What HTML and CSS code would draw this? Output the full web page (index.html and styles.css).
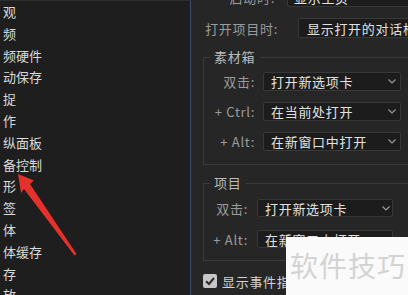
FILE: index.html
```html
<!DOCTYPE html>
<html lang="zh-CN">
<head>
<meta charset="utf-8">
<title>首选项</title>
<link rel="stylesheet" href="styles.css">
</head>
<body>
<div class="screen">
  <div class="side">
    <ul class="list">
      <li>观</li>
      <li>频</li>
      <li>频硬件</li>
      <li>动保存</li>
      <li>捉</li>
      <li>作</li>
      <li>纵面板</li>
      <li>备控制</li>
      <li>形</li>
      <li>签</li>
      <li>体</li>
      <li>体缓存</li>
      <li>存</li>
      <li>放</li>
    </ul>
    <svg class="arrow" width="90" height="100" viewBox="0 165 90 100">
      <polygon points="18,174 34,180.5 30,184 76.5,254 74.5,255.5 24,189 21,193" fill="#e5312b"/>
    </svg>
  </div>
  <div class="main">
    <div class="row r1">
      <span class="lbl">启动时:</span>
      <div class="sel wide">显示主页</div>
    </div>
    <div class="row r2">
      <span class="lbl">打开项目时:</span>
      <div class="sel wide">显示打开的对话框</div>
    </div>
    <fieldset class="grp g1">
      <legend>素材箱</legend>
      <div class="rows">
        <div class="row">
          <span class="lbl">双击:</span>
          <div class="sel">打开新选项卡<svg class="chev" width="8" height="5" viewBox="0 0 8 5"><polyline points="0.5,0.5 4,4 7.5,0.5" fill="none" stroke="#9a9a9a" stroke-width="1.2"/></svg></div>
        </div>
        <div class="row">
          <span class="lbl">+ Ctrl:</span>
          <div class="sel">在当前处打开<svg class="chev" width="8" height="5" viewBox="0 0 8 5"><polyline points="0.5,0.5 4,4 7.5,0.5" fill="none" stroke="#9a9a9a" stroke-width="1.2"/></svg></div>
        </div>
        <div class="row">
          <span class="lbl">+ Alt:</span>
          <div class="sel">在新窗口中打开<svg class="chev" width="8" height="5" viewBox="0 0 8 5"><polyline points="0.5,0.5 4,4 7.5,0.5" fill="none" stroke="#9a9a9a" stroke-width="1.2"/></svg></div>
        </div>
      </div>
    </fieldset>
    <fieldset class="grp g2">
      <legend>项目</legend>
      <div class="rows">
        <div class="row">
          <span class="lbl">双击:</span>
          <div class="sel">打开新选项卡<svg class="chev" width="8" height="5" viewBox="0 0 8 5"><polyline points="0.5,0.5 4,4 7.5,0.5" fill="none" stroke="#9a9a9a" stroke-width="1.2"/></svg></div>
        </div>
        <div class="row">
          <span class="lbl">+ Alt:</span>
          <div class="sel">在新窗口中打开<svg class="chev" width="8" height="5" viewBox="0 0 8 5"><polyline points="0.5,0.5 4,4 7.5,0.5" fill="none" stroke="#9a9a9a" stroke-width="1.2"/></svg></div>
        </div>
      </div>
    </fieldset>
    <div class="chk">
      <span class="box"><svg width="14" height="14" viewBox="0 0 14 14"><polyline points="3,7.2 6,10 11,4" fill="none" stroke="#2a2a2a" stroke-width="2"/></svg></span>
      <span class="chk-text">显示事件指示器</span>
    </div>
  </div>
  <div class="wm">软件技巧</div>
</div>
</body>
</html>
```
FILE: styles.css
```css
* { box-sizing: border-box; }
html, body {
  margin: 0;
  padding: 0;
  background: #252525;
}
body {
  width: 408px;
  height: 295px;
  overflow: hidden;
  font-family: "Noto Sans CJK SC", "Noto Sans", sans-serif;
}
.screen {
  position: relative;
  display: flex;
  width: 408px;
  height: 295px;
  overflow: hidden;
}
.side {
  position: relative;
  width: 191px;
  flex: none;
  background: #1e1e1e;
  border-top: 1px solid #2e2e2e;
  border-right: 1px solid #3f4d6d;
}
.list {
  list-style: none;
  margin: 0;
  padding: 0 0 0 3px;
  font-size: 13px;
  line-height: 21.8px;
  color: #dadada;
}
.arrow {
  position: absolute;
  left: 0;
  top: 164px;
}
.main {
  flex: 1;
  min-width: 0;
  overflow: hidden;
  background: #262626;
  font-size: 13px;
  letter-spacing: 0.7px;
}
.row {
  display: flex;
  align-items: center;
}
.lbl {
  flex: none;
  text-align: right;
  color: #9b9b9b;
  white-space: nowrap;
}
.sel {
  display: flex;
  align-items: center;
  justify-content: space-between;
  background: #1c1c1c;
  border: 1px solid #383838;
  border-radius: 2px;
  color: #e2e2e2;
  white-space: nowrap;
  padding: 0 4px 0 7px;
}
.sel.wide {
  flex: none;
  width: 200px;
  height: 20px;
}
.r1 {
  margin-top: -12px;
  height: 19px;
}
.r1 .lbl { width: 84px; margin-right: 12px; }
.r1 .sel { height: 19px; padding-left: 6px; }
.r2 {
  margin-top: 11px;
  height: 20px;
}
.r2 .lbl { width: 87px; margin-right: 20px; }
.r2 .sel { padding-left: 8px; }
.grp {
  margin: 0 -40px 0 12px;
  padding: 0;
  border: 1px solid #3a3a3a;
  min-width: 0;
}
.grp legend {
  margin-left: 6px;
  padding: 0 5px 0 4px;
  font-size: 13px;
  line-height: 16px;
  color: #bcbcbc;
}
.rows {
  display: flex;
  flex-direction: column;
}
.g1 { margin-top: 11px; }
.g1 .rows { gap: 11px; padding: 7px 0 13px; }
.g1 .row { height: 19px; }
.g1 .lbl { width: 51px; margin-right: 8px; }
.g1 .sel { width: 138px; height: 19px; }
.g2 { margin-top: 10px; }
.g2 .rows { gap: 13px; padding: 8px 0 12px; }
.g2 .row { height: 18px; }
.g2 .lbl { width: 44px; margin-right: 9px; }
.g2 .sel { width: 136px; height: 18px; padding: 0 2px 0 7px; }
.chev { flex: none; }
.chk {
  display: flex;
  align-items: center;
  margin: 13px 0 0 12px;
  height: 14px;
}
.box {
  display: block;
  width: 14px;
  height: 14px;
  border-radius: 2px;
  background: #c6c6c6;
  margin-right: 5px;
}
.box svg { display: block; }
.chk-text {
  color: #d2d2d2;
  white-space: nowrap;
}
.wm {
  position: absolute;
  left: 286px;
  top: 237px;
  right: 0;
  bottom: 0;
  background: #fafafa;
  color: #d3d3d3;
  font-size: 28px;
  line-height: 32px;
  letter-spacing: 1px;
  padding: 12px 0 0 4px;
  white-space: nowrap;
}
```
